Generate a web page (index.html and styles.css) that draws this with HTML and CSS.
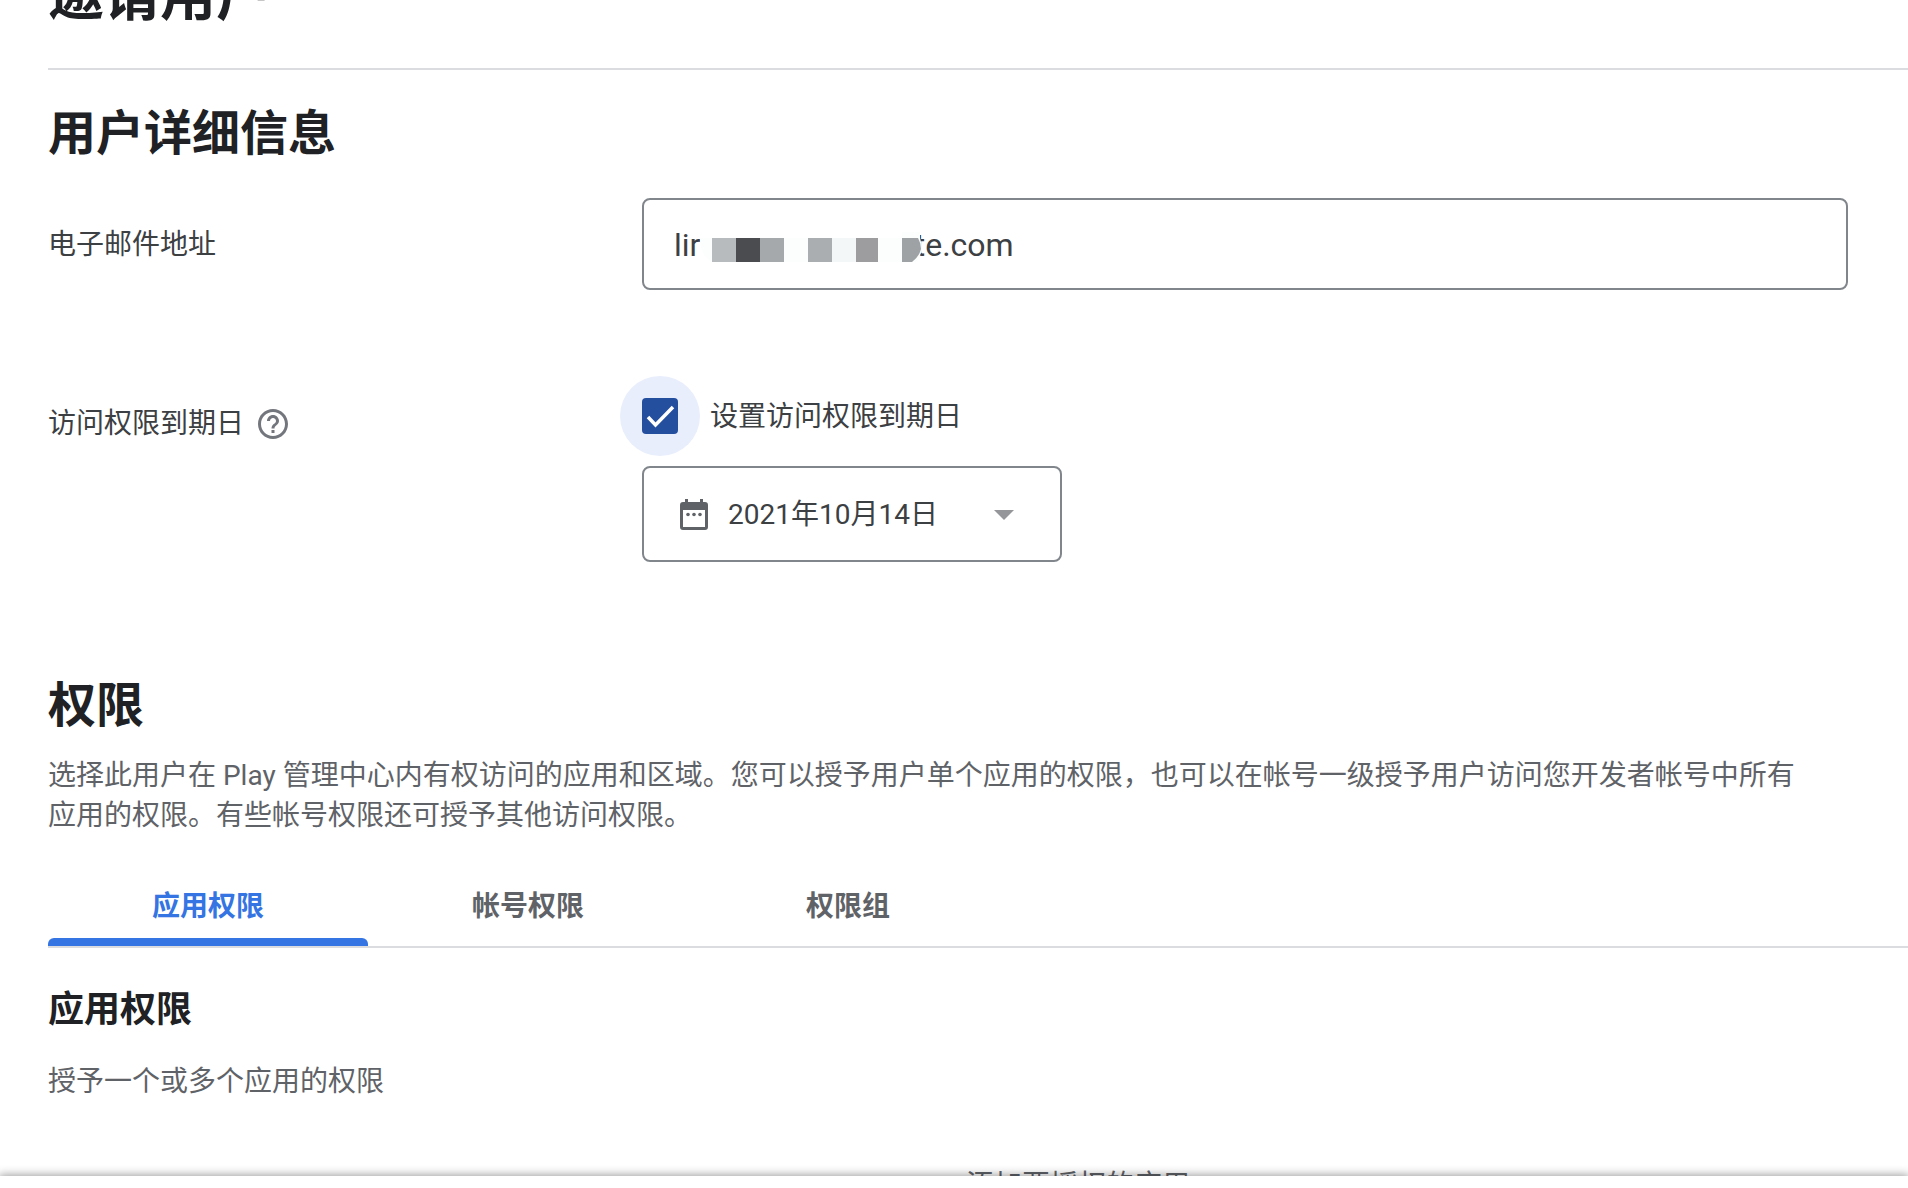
FILE: index.html
```html
<!DOCTYPE html>
<html lang="zh-CN">
<head>
<meta charset="utf-8">
<meta name="viewport" content="width=device-width, initial-scale=1">
<title>邀请用户</title>
<link rel="stylesheet" href="styles.css">
</head>
<body>
<main class="content">
  <header class="page-header">
    <h1 class="page-title">邀请用户</h1>
  </header>

  <section class="details">
    <h2 class="section-title">用户详细信息</h2>
    <div class="form-row">
      <label class="field-label" for="email">电子邮件地址</label>
      <div class="email-field">
        <input class="email-input" id="email" type="text" value="lir                           te.com">
        <svg class="email-mask" width="222" height="30" viewBox="0 -6 222 30" aria-hidden="true">
          <path fill="#fcfdfd" d="M0 0h202v-6h18v6q2 6 2 12q-2 7-6 12H12Q0 18 0 0z"/>
          <path fill="#b7bbbd" d="M12 0h24v24H12z"/>
          <path fill="#4b4c50" d="M36 0h24v24H36z"/>
          <path fill="#a6a9ac" d="M60 0h24v24H60z"/>
          <path fill="#abaeb0" d="M108 0h24v24h-24z"/>
          <path fill="#f3f7f8" d="M132 0h24v24h-24z"/>
          <path fill="#9d9d9f" d="M156 0h22v24h-22z"/>
          <path fill="#9fa2a5" d="M202 0h16q3 5 3 11q-2 8-9 13h-10z"/>
        </svg>
      </div>
    </div>
    <div class="form-row expiry-row">
      <div class="field-label expiry-label">
        <span>访问权限到期日</span>
        <button class="help-button" type="button" aria-label="帮助">
          <svg width="36" height="36" viewBox="0 0 24 24" aria-hidden="true"><path fill="#73777d" d="M11 18h2v-2h-2v2zm1-16C6.480 2 2 6.480 2 12s4.480 10 10 10 10-4.480 10-10S17.520 2 12 2zm0 18c-4.410 0-8-3.590-8-8s3.590-8 8-8 8 3.590 8 8-3.590 8-8 8zm0-14c-2.210 0-4 1.790-4 4h2c0-1.100.9-2 2-2s2 .9 2 2c0 2-3 1.750-3 5h2c0-2.250 3-2.500 3-5 0-2.210-1.790-4-4-4z"/></svg>
        </button>
      </div>
      <div class="expiry-controls">
        <div class="check-line">
          <span class="check-halo">
            <input class="check-input" id="expiry" type="checkbox" checked>
            <svg class="check-mark" width="36" height="36" viewBox="0 0 36 36" aria-hidden="true"><path d="M6 19l7.500 8L31 9" fill="none" stroke="#fff" stroke-width="3.500"/></svg>
          </span>
          <label class="check-label" for="expiry">设置访问权限到期日</label>
        </div>
        <button class="date-button" type="button">
          <svg class="date-icon" width="28" height="32" viewBox="0 0 28 32" aria-hidden="true"><path fill="#5f6368" fill-rule="evenodd" d="M5 0h3v3h12V0h3v3h2a3 3 0 0 1 3 3v22a3 3 0 0 1-3 3H3a3 3 0 0 1-3-3V6a3 3 0 0 1 3-3h2zM3 11v17h22V11z"/><circle cx="8" cy="15.500" r="1.800" fill="#5f6368"/><circle cx="14" cy="15.500" r="1.800" fill="#5f6368"/><circle cx="20" cy="15.500" r="1.800" fill="#5f6368"/></svg>
          <span>2021年10月14日</span>
          <svg class="date-arrow" width="20" height="10" viewBox="0 0 20 10" aria-hidden="true"><path fill="#949699" d="M0 0h20L10 10z"/></svg>
        </button>
      </div>
    </div>
  </section>

  <section class="permissions">
    <h2 class="section-title">权限</h2>
    <p class="description">选择此用户在 Play 管理中心内有权访问的应用和区域。您可以授予用户单个应用的权限，也可以在帐号一级授予用户访问您开发者帐号中所有应用的权限。有些帐号权限还可授予其他访问权限。</p>
    <div class="tabs" role="tablist">
      <button class="tab tab-active" type="button" role="tab" aria-selected="true">应用权限</button>
      <button class="tab" type="button" role="tab" aria-selected="false">帐号权限</button>
      <button class="tab" type="button" role="tab" aria-selected="false">权限组</button>
    </div>
    <h3 class="panel-title">应用权限</h3>
    <p class="panel-text">授予一个或多个应用的权限</p>
    <button class="add-app" type="button">添加要授权的应用</button>
  </section>
</main>
<footer class="action-bar"></footer>
</body>
</html>
```
FILE: styles.css
```css
* {
  box-sizing: border-box;
}

body {
  display: flex;
  flex-direction: column;
  height: 100vh;
  margin: 0;
  overflow: hidden;
  background: #fff;
  color: #3c4043;
  font-family: Roboto, "Noto Sans CJK SC", sans-serif;
  font-size: 28px;
  line-height: 40px;
}

h1, h2, h3, p {
  margin: 0;
}

button {
  padding: 0;
  border: 0;
  background: none;
  color: inherit;
  font: inherit;
}

.content {
  flex: 1;
  min-height: 0;
  overflow: hidden;
  padding-left: 48px;
}

.page-header {
  display: flex;
  align-items: flex-end;
  height: 70px;
  padding-bottom: 36px;
  overflow: hidden;
  border-bottom: 2px solid #dadce0;
}

.page-title {
  color: #202124;
  font-size: 56px;
  font-weight: 700;
  line-height: 72px;
}

.section-title {
  color: #202124;
  font-size: 48px;
  font-weight: 700;
  line-height: 64px;
}

.details {
  padding: 32px 60px 0 0;
}

.form-row {
  display: grid;
  grid-template-columns: 594px 1fr;
  align-items: center;
  margin-top: 32px;
}

.field-label,
.check-label {
  padding-top: 2px;
}

.email-field {
  position: relative;
}

.email-input {
  display: block;
  width: 100%;
  height: 92px;
  padding: 2px 30px 0;
  border: 2px solid #80868b;
  border-radius: 8px;
  background: #fff;
  color: #3c4043;
  font: inherit;
  font-size: 32px;
}

.email-mask {
  position: absolute;
  top: 34px;
  left: 58px;
}

.expiry-row {
  align-items: start;
  margin-top: 86px;
}

.expiry-label {
  display: flex;
  align-items: center;
  gap: 11px;
  padding-top: 28px;
}

.help-button {
  display: flex;
}

.check-line {
  display: flex;
  align-items: center;
  gap: 10px;
  margin-left: -22px;
}

.check-halo {
  display: grid;
  place-items: center;
  width: 80px;
  height: 80px;
  border-radius: 50%;
  background: #e8eefc;
}

.check-input,
.check-mark {
  grid-area: 1 / 1;
  width: 36px;
  height: 36px;
  margin: 0;
}

.check-input {
  appearance: none;
  border-radius: 4px;
  background: #244f9f;
}

.check-mark {
  pointer-events: none;
}

.date-button {
  display: flex;
  align-items: center;
  width: 420px;
  height: 96px;
  margin-top: 10px;
  padding: 2px 46px 0 36px;
  border: 2px solid #80868b;
  border-radius: 8px;
}

.date-icon {
  margin-right: 20px;
}

.date-arrow {
  margin-left: auto;
}

.permissions {
  padding-top: 112px;
}

.description {
  max-width: 1772px;
  margin-top: 18px;
  color: #5f6368;
}

.tabs {
  display: flex;
  margin-top: 30px;
  border-bottom: 2px solid #dadce0;
}

.tab {
  position: relative;
  width: 320px;
  height: 80px;
  padding-top: 2px;
  color: #5f6368;
  font-weight: 700;
}

.tab-active {
  color: #3574e3;
}

.tab-active::after {
  content: "";
  position: absolute;
  right: 0;
  bottom: 0;
  left: 0;
  height: 8px;
  border-radius: 6px 6px 0 0;
  background: #3574e3;
}

.panel-title {
  margin-top: 38px;
  color: #202124;
  font-size: 36px;
  font-weight: 700;
  line-height: 48px;
}

.panel-text {
  margin-top: 28px;
  color: #5f6368;
}

.add-app {
  display: block;
  margin: 64px 0 0 918px;
  color: #5f6368;
}

.action-bar {
  z-index: 1;
  flex: none;
  height: 12px;
  background: #fff;
  box-shadow: 0 0 10px 1px #00000066;
}
```
